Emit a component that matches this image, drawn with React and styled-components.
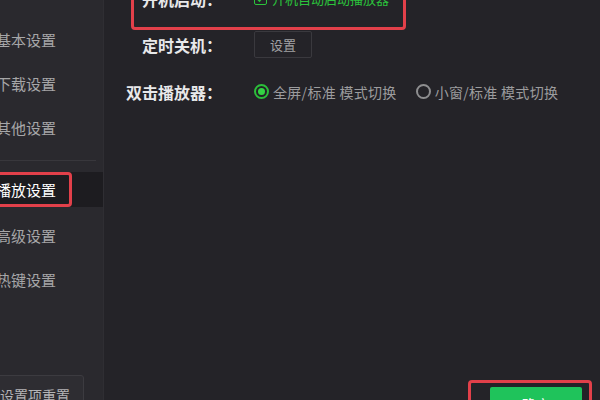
import React, { useState } from 'react';
import styled, { createGlobalStyle } from 'styled-components';

const GlobalStyle = createGlobalStyle`
  html, body {
    margin: 0;
    padding: 0;
    background: #242328;
  }
  * {
    box-sizing: border-box;
  }
`;

const menu = ['基本设置', '下载设置', '其他设置', '-', '播放设置', '高级设置', '热键设置'];

const App = () => {
  const [active, setActive] = useState('播放设置');
  const [mode, setMode] = useState('full');
  const [autoStart, setAutoStart] = useState(true);

  return (
    <Window>
      <GlobalStyle />
      <Sidebar>
        {menu.map((item, i) =>
          item === '-' ? (
            <Divider key={i} />
          ) : item === active ? (
            <ActiveItem key={item}>
              <Marked>{item}</Marked>
            </ActiveItem>
          ) : (
            <MenuItem key={item} onClick={() => setActive(item)}>
              {item}
            </MenuItem>
          )
        )}
        <ResetButton>设置项重置</ResetButton>
      </Sidebar>

      <Main>
        <MarkedRow>
          <Label $width={88}>开机启动：</Label>
          <CheckLabel onClick={() => setAutoStart(!autoStart)}>
            <CheckBox $on={autoStart}>
              {autoStart && (
                <svg width='9' height='9' viewBox='0 0 9 9'>
                  <path d='M1 4.5 L3.5 7 L8 1.5' stroke='#28c43b' strokeWidth='1.6' fill='none' />
                </svg>
              )}
            </CheckBox>
            开机自动启动播放器
          </CheckLabel>
        </MarkedRow>

        <Row $top={1}>
          <Label>定时关机：</Label>
          <SmallButton>设置</SmallButton>
        </Row>

        <Row $top={20}>
          <Label>双击播放器：</Label>
          <RadioGroup>
            <RadioOption onClick={() => setMode('full')}>
              <Radio $on={mode === 'full'} />
              全屏/标准 模式切换
            </RadioOption>
            <RadioOption onClick={() => setMode('mini')}>
              <Radio $on={mode === 'mini'} />
              小窗/标准 模式切换
            </RadioOption>
          </RadioGroup>
        </Row>

        <Footer>
          <MarkedFooter>
            <ConfirmButton>确定</ConfirmButton>
          </MarkedFooter>
        </Footer>
      </Main>
    </Window>
  );
};

export default App;

const Window = styled.div`
  width: 600px;
  height: 400px;
  display: flex;
  overflow: hidden;
  background: #242328;
  font-family: 'Noto Sans CJK SC', 'Noto Sans', sans-serif;
`;

const Sidebar = styled.div`
  width: 121px;
  margin-left: -17px;
  height: 400px;
  flex: none;
  display: flex;
  flex-direction: column;
  padding-top: 18px;
  background: #2a292e;
  border-right: 1px solid #2f2e33;
`;

const MenuItem = styled.div`
  height: 44px;
  line-height: 44px;
  padding-left: 13px;
  font-size: 15px;
  color: #a6a6a8;
  cursor: pointer;
`;

const Divider = styled.div`
  height: 1px;
  margin: 10px 7px 11px 0;
  background: #38373c;
`;

const ActiveItem = styled.div`
  height: 35px;
  margin-bottom: 7px;
  background: #1d1c20;
  display: flex;
  padding-left: 4px;
`;

const Marked = styled.span`
  height: 35px;
  border: 3px solid #e2404a;
  border-radius: 4px;
  padding: 0 13px 0 6px;
  display: flex;
  align-items: center;
  font-size: 15px;
  color: #ffffff;
`;

const ResetButton = styled.div`
  margin-top: auto;
  margin-bottom: -11px;
  margin-left: 4px;
  margin-right: 19px;
  height: 36px;
  padding: 9px 0 0 12px;
  font-size: 14px;
  line-height: 20px;
  color: #b4b4b6;
  background: #2e2d32;
  border: 1px solid #3c3b40;
  border-radius: 3px;
`;

const Main = styled.div`
  flex: 1;
  height: 400px;
  display: flex;
  flex-direction: column;
  background: #242328;
`;

const Row = styled.div`
  display: flex;
  align-items: center;
  height: 27px;
  margin-top: ${(p) => p.$top}px;
`;

const MarkedRow = styled.div`
  display: flex;
  align-items: center;
  margin-top: -23px;
  margin-left: 27px;
  width: 275px;
  height: 53px;
  padding-bottom: 10px;
  border: 3px solid #e2404a;
  border-radius: 4px;
`;

const Label = styled.div`
  width: ${(p) => p.$width || 118}px;
  flex: none;
  text-align: right;
  font-size: 16px;
  font-weight: bold;
  color: #e8e8ea;
  margin-right: 32px;
  white-space: nowrap;
`;

const CheckLabel = styled.div`
  display: flex;
  align-items: center;
  gap: 5px;
  font-size: 13px;
  color: #2bc43c;
  cursor: pointer;
  white-space: nowrap;
`;

const CheckBox = styled.span`
  width: 13px;
  height: 13px;
  border: 1px solid #2bc43c;
  border-radius: 2px;
  display: flex;
  align-items: center;
  justify-content: center;
`;

const SmallButton = styled.button`
  width: 58px;
  height: 27px;
  padding: 0;
  background: transparent;
  border: 1px solid #3a393e;
  border-radius: 2px;
  font-family: inherit;
  font-size: 13px;
  color: #a2a2a4;
  cursor: pointer;
`;

const RadioGroup = styled.div`
  display: flex;
  align-items: center;
  gap: 19px;
`;

const RadioOption = styled.label`
  display: flex;
  align-items: center;
  gap: 4px;
  font-size: 14px;
  letter-spacing: 0.3px;
  color: #9c9c9e;
  cursor: pointer;
  white-space: nowrap;
`;

const Radio = styled.span`
  width: 15px;
  height: 15px;
  border-radius: 50%;
  border: 2px solid ${(p) => (p.$on ? '#2bbf3a' : '#8e8e90')};
  display: flex;
  align-items: center;
  justify-content: center;
  &::after {
    content: '';
    width: 7px;
    height: 7px;
    border-radius: 50%;
    background: ${(p) => (p.$on ? '#33d444' : 'transparent')};
  }
`;

const Footer = styled.div`
  margin-top: auto;
  margin-bottom: -28px;
  display: flex;
  justify-content: flex-end;
  padding-right: 8px;
`;

const MarkedFooter = styled.div`
  border: 3px solid #e2404a;
  border-radius: 4px;
  padding: 4px 7px 4px 19px;
`;

const ConfirmButton = styled.button`
  width: 92px;
  height: 34px;
  border: none;
  border-radius: 2px;
  background: #1fc35b;
  color: #ffffff;
  font-family: inherit;
  font-size: 14px;
  cursor: pointer;
`;
